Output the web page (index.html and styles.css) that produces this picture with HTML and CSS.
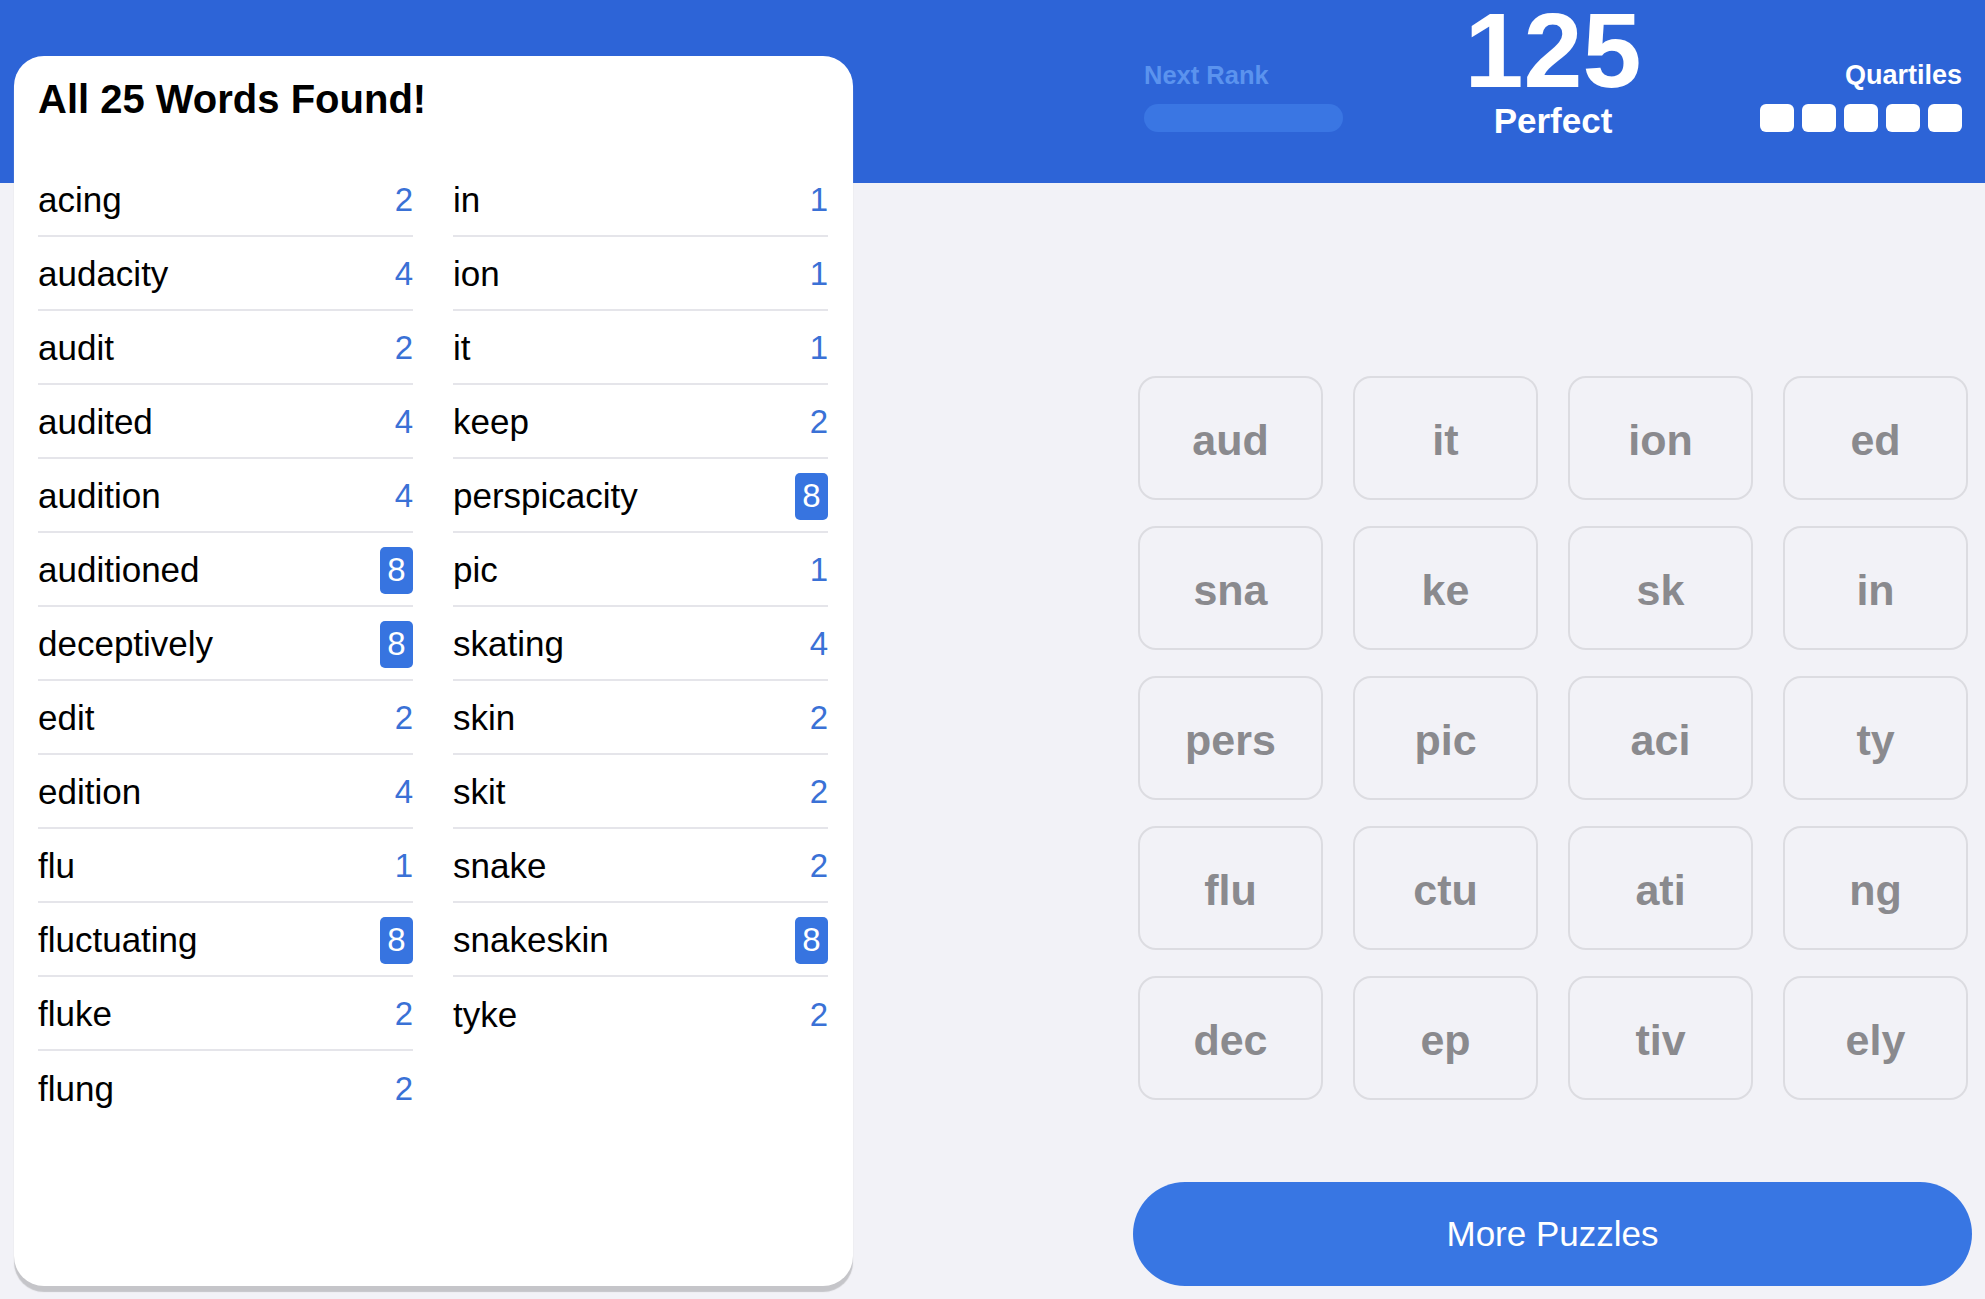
FILE: index.html
```html
<!DOCTYPE html>
<html lang="en">
<head>
  <meta charset="UTF-8">
  <meta name="viewport" content="width=device-width, initial-scale=1.0">
  <title>Quartiles - All Words Found</title>
  <link rel="stylesheet" href="styles.css">
</head>
<body>
  <div class="page">
    <section class="found-card">
      <h2>All 25 Words Found!</h2>
      <div class="word-lists">
        <ul class="word-list" id="list-left"></ul>
        <ul class="word-list" id="list-right"></ul>
      </div>
    </section>

    <section class="game">
      <div class="stats">
        <div class="next-rank">
          <div class="label">Next Rank</div>
          <div class="bar"></div>
        </div>
        <div class="score">
          <div class="points">125</div>
          <div class="rank">Perfect</div>
        </div>
        <div class="quartiles">
          <div class="label">Quartiles</div>
          <div class="quartile-boxes">
            <span></span><span></span><span></span><span></span><span></span>
          </div>
        </div>
      </div>

      <div class="tiles" id="tiles"></div>

      <button class="more-btn">More Puzzles</button>
    </section>
  </div>

  <script>
    const words = [
      ['acing', 2], ['audacity', 4], ['audit', 2], ['audited', 4], ['audition', 4],
      ['auditioned', 8], ['deceptively', 8], ['edit', 2], ['edition', 4], ['flu', 1],
      ['fluctuating', 8], ['fluke', 2], ['flung', 2],
      ['in', 1], ['ion', 1], ['it', 1], ['keep', 2], ['perspicacity', 8], ['pic', 1],
      ['skating', 4], ['skin', 2], ['skit', 2], ['snake', 2], ['snakeskin', 8], ['tyke', 2]
    ];

    const tiles = [
      'aud', 'it', 'ion', 'ed',
      'sna', 'ke', 'sk', 'in',
      'pers', 'pic', 'aci', 'ty',
      'flu', 'ctu', 'ati', 'ng',
      'dec', 'ep', 'tiv', 'ely'
    ];

    function renderWords() {
      const left = document.getElementById('list-left');
      const right = document.getElementById('list-right');
      words.forEach(([word, pts], i) => {
        const li = document.createElement('li');
        li.innerHTML = `
          <span class="word">${word}</span>
          <span class="pts${pts === 8 ? ' full' : ''}">${pts}</span>
        `;
        (i < 13 ? left : right).appendChild(li);
      });
    }

    function renderTiles() {
      const grid = document.getElementById('tiles');
      tiles.forEach(t => {
        const tile = document.createElement('div');
        tile.className = 'tile';
        tile.textContent = t;
        grid.appendChild(tile);
      });
    }

    renderWords();
    renderTiles();
  </script>
</body>
</html>
```

FILE: styles.css
```css
* {
  box-sizing: border-box;
}

body {
  margin: 0;
  min-height: 100vh;
  font-family: 'Liberation Sans', Arial, sans-serif;
  background: linear-gradient(#2d64d7 0, #2d64d7 183px, #f2f2f7 183px);
  color: #000;
}

.page {
  display: flex;
  justify-content: space-between;
  align-items: flex-start;
  padding: 0 13px 0 14px;
}

/* Words card */
.found-card {
  width: 839px;
  height: 1230px;
  margin-top: 56px;
  padding: 23px 25px 0 24px;
  background: white;
  border-radius: 30px;
  box-shadow: 0 6px 1px #c5c5c9;
}

.found-card h2 {
  margin: 0;
  font-size: 40px;
  line-height: 40px;
  font-weight: bold;
}

.word-lists {
  display: grid;
  grid-template-columns: 1fr 1fr;
  column-gap: 40px;
  margin-top: 44px;
}

.word-list {
  list-style: none;
  margin: 0;
  padding: 0;
}

.word-list li {
  display: flex;
  justify-content: space-between;
  align-items: center;
  height: 74px;
  padding-top: 2px;
  border-bottom: 2px solid #e5e5ea;
  font-size: 35px;
}

.word-list li:last-child {
  border-bottom: none;
}

.pts {
  color: #3a71d6;
  font-size: 33px;
}

.pts.full {
  display: flex;
  align-items: center;
  justify-content: center;
  width: 33px;
  height: 47px;
  border-radius: 5px;
  background: #3774e0;
  color: white;
}

/* Game side */
.game {
  width: 839px;
}

.stats {
  height: 183px;
  display: grid;
  grid-template-columns: 1fr auto 1fr;
  padding: 0 10px 0 11px;
  color: white;
}

.next-rank {
  padding-top: 61px;
}

.next-rank .label {
  font-size: 25.5px;
  line-height: 28px;
  font-weight: bold;
  color: #5b93ee;
}

.next-rank .bar {
  width: 199px;
  height: 28px;
  margin-top: 15px;
  border-radius: 14px;
  background: #3a76e3;
}

.score {
  text-align: center;
}

.score .points {
  font-size: 106px;
  line-height: 100px;
  font-weight: bold;
}

.score .rank {
  margin-top: 3px;
  font-size: 35px;
  line-height: 36px;
  font-weight: bold;
}

.quartiles {
  padding-top: 61px;
  display: flex;
  flex-direction: column;
  align-items: flex-end;
}

.quartiles .label {
  font-size: 27px;
  line-height: 28px;
  font-weight: bold;
}

.quartile-boxes {
  display: flex;
  gap: 8px;
  margin-top: 15px;
}

.quartile-boxes span {
  width: 34px;
  height: 28px;
  border-radius: 6px;
  background: white;
}

.tiles {
  display: grid;
  grid-template-columns: repeat(4, 185px);
  column-gap: 30px;
  row-gap: 26px;
  margin: 193px 0 0 5px;
}

.tile {
  height: 124px;
  padding-top: 4px;
  display: flex;
  align-items: center;
  justify-content: center;
  border: 2px solid #dcdce1;
  border-radius: 18px;
  font-size: 43px;
  font-weight: bold;
  color: #8a8a8e;
}

.more-btn {
  display: block;
  width: 100%;
  height: 104px;
  margin-top: 82px;
  border: none;
  border-radius: 52px;
  background: #3876e3;
  color: white;
  font-family: inherit;
  font-size: 35px;
  cursor: pointer;
}
```
